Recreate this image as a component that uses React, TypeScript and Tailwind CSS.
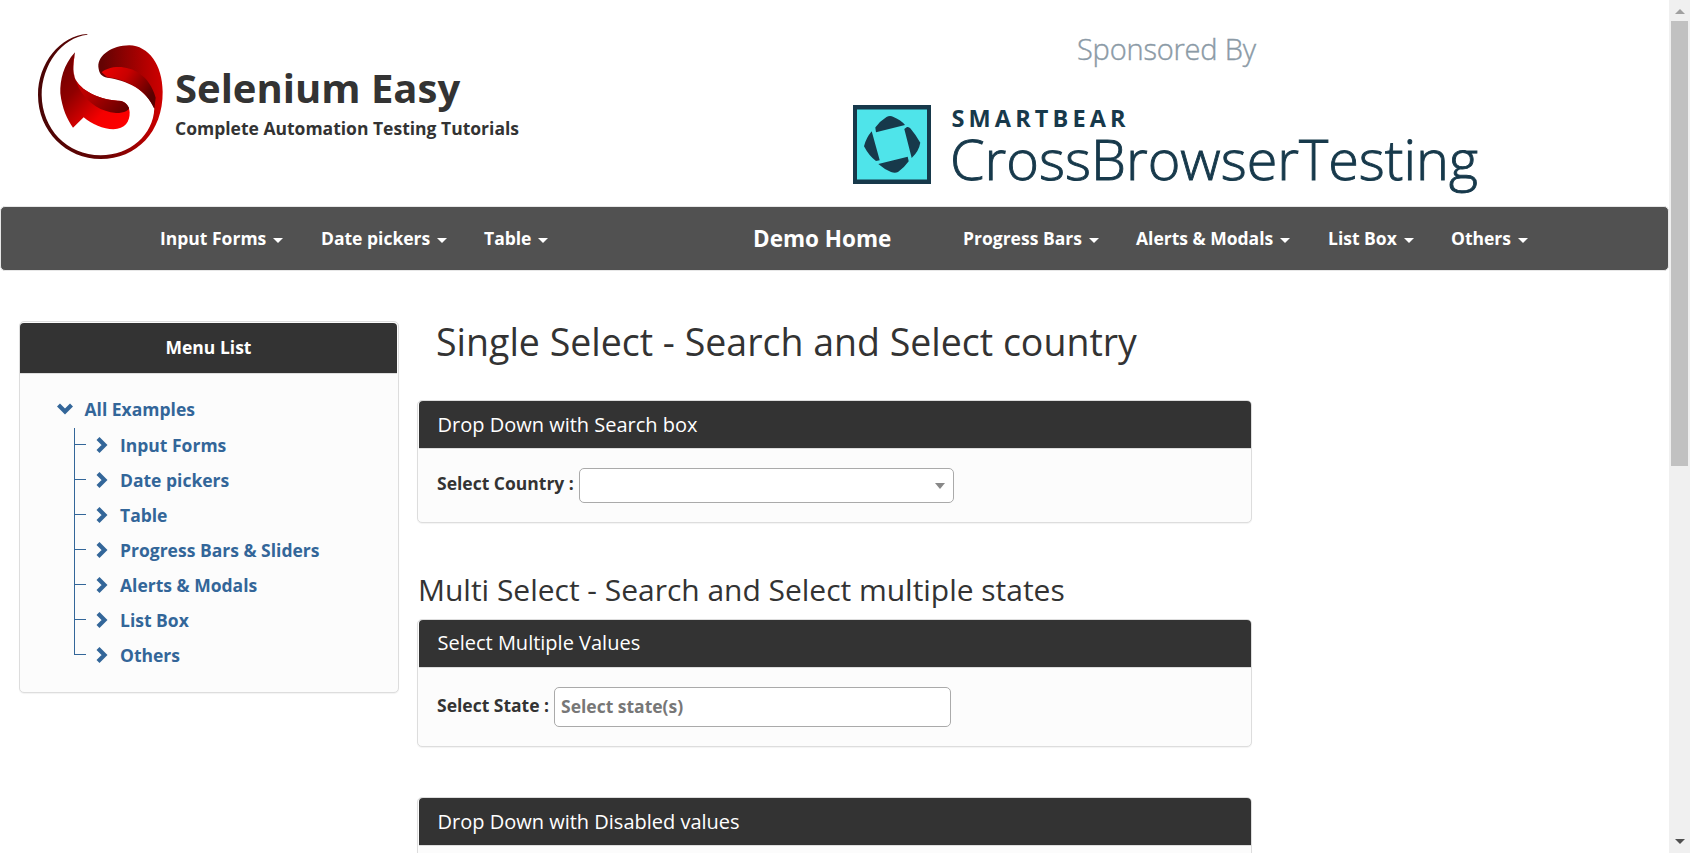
import React from "react";

function NavItem({ label, className }: { label: string; className: string }) {
  return (
    <a className={`flex shrink-0 items-center whitespace-nowrap text-[17.5px] font-bold leading-[25px] text-white ${className}`}>
      {label}
      <span className="ml-[7px] mt-[4px] border-x-[5px] border-t-[5px] border-x-transparent border-t-white" />
    </a>
  );
}

function Logo() {
  return (
    <svg className="ml-[30px] mt-[25px] h-[145px] w-[150px] shrink-0" viewBox="0 0 450 435">
      <defs>
        <linearGradient id="ring" x1="0" y1="0" x2="1" y2="0">
          <stop offset="0" stopColor="#4a0505" />
          <stop offset=".52" stopColor="#650303" />
          <stop offset=".85" stopColor="#b00000" />
          <stop offset="1" stopColor="#d00000" />
        </linearGradient>
        <linearGradient id="fold" x1="0" y1="0" x2="1" y2=".5">
          <stop offset="0" stopColor="#f00000" />
          <stop offset=".45" stopColor="#c80000" />
          <stop offset="1" stopColor="#5a0000" />
        </linearGradient>
        <linearGradient id="low" x1="0" y1="0" x2="1" y2="1">
          <stop offset="0" stopColor="#6a0000" />
          <stop offset=".35" stopColor="#8f0000" />
          <stop offset=".7" stopColor="#f40000" />
          <stop offset="1" stopColor="#ff0000" />
        </linearGradient>
        <linearGradient id="band" x1="0" y1="0" x2="1" y2="1">
          <stop offset="0" stopColor="#e80000" />
          <stop offset=".5" stopColor="#b40000" />
          <stop offset="1" stopColor="#5a0000" />
        </linearGradient>
      </defs>
      <path fill="url(#ring)" d="M172 27C90 32 24 115 24 210C24 320 110 402 212 402C320 402 399 320 398 200C398 120 355 62 298 61C245 62 205 90 205 125C207 145 215 155 232 158C290 165 350 195 373 250C370 330 300 391 212 391C110 391 36 310 35 210C35 120 95 38 172 29Z" />
      <path fill="url(#fold)" d="M215 142C250 112 350 118 377 218L373 252C348 196 300 165 232 157Z" />
      <path fill="url(#low)" d="M135 82C100 120 90 165 91 205C96 250 112 285 129 308L161 277C185 298 220 312 250 313C285 312 300 290 299 262C298 240 282 227 263 227C200 223 140 190 132 150C128 125 132 105 135 82Z" />
      <path fill="url(#band)" d="M134 88C113 165 170 258 258 264C284 264 299 254 297 248C290 232 278 227 263 227C200 223 140 190 132 150C128 125 132 105 134 88Z" />
    </svg>
  );
}

function SponsorLogo() {
  return (
    <svg className="h-[100px] w-[640px] overflow-visible" viewBox="0 0 640 100" fill="#17394b">
      <path d="M0 0H78V79H0Z" />
      <path d="M4 4.500H74V74.500H4Z" fill="#4fe4ea" />
      <path d="M33.500 12Q37 10 40.500 12Q48 15 52 20L23 27.300L22.300 22.500Q27 16 33.500 12ZM51.300 24L54 22Q56 21.500 57.500 23.500Q63 30 67.300 37.700Q66 46 58.700 53ZM18.700 26.300L26.700 55.300L23 56Q16 51 11 41.300Q13 33 18.700 26.300ZM54.700 51.700L55.700 56.300Q51 63 45 67Q42 68.500 38 67Q31 64 25.300 59Z" />
      <text x="98.500" y="22" fontSize="23.500" fontWeight="700" textLength="174" lengthAdjust="spacing">SMARTBEAR</text>
      <text x="97" y="75" fontSize="54.500" fontWeight="300" stroke="#17394b" strokeWidth="0.900" textLength="528" lengthAdjust="spacingAndGlyphs">CrossBrowserTesting</text>
    </svg>
  );
}

function Panel({ title, className, titleClassName = "leading-[47px]", children }: { title: string; className: string; titleClassName?: string; children?: React.ReactNode }) {
  return (
    <section className={`w-[835px] rounded-[5px] border border-[#ddd] bg-[#fcfcfc] shadow-[0_1px_1px_rgba(0,0,0,0.05)] ${className}`}>
      <h3 className={`ml-px h-[48px] rounded-t-[4px] border-b border-[#ddd] bg-[#333] pl-[18.500px] text-[20px] text-white ${titleClassName}`}>{title}</h3>
      {children}
    </section>
  );
}

const examples = ["Input Forms", "Date pickers", "Table", "Progress Bars & Sliders", "Alerts & Modals", "List Box", "Others"];

function Chevron({ className }: { className: string }) {
  return (
    <svg className={className} viewBox="0 0 12 16" fill="none" stroke="#369" strokeWidth="4.200">
      <path d="M2 1.500L8.500 8L2 14.500" />
    </svg>
  );
}

export default function App() {
  return (
    <div className="flex h-[853px] w-[1690px] overflow-hidden bg-white font-['Open_Sans',sans-serif] text-[#333]">
      <div className="h-full w-[1669px] shrink-0">
        <header className="flex h-[206px]">
          <Logo />
          <div className="ml-[-5px] w-[678px] shrink-0 pt-[60px]">
            <h1 className="text-[40px] font-bold leading-[56px]">Selenium Easy</h1>
            <p className="text-[17.5px] font-bold leading-[25px]">Complete Automation Testing Tutorials</p>
          </div>
          <div className="w-[640px] shrink-0 pt-[28px]">
            <p className="pl-[224px] text-[29px] font-light leading-[42px] tracking-[-0.2px] text-[#8b9aa6] [-webkit-text-stroke:0.4px_#8b9aa6]">Sponsored By</p>
            <div className="pt-[35px]">
              <SponsorLogo />
            </div>
          </div>
        </header>
        <nav className="flex h-[65px] items-center rounded-[5px] border border-[#e7e7e7] bg-[#515151]">
          <NavItem label="Input Forms" className="ml-[159px] w-[161px]" />
          <NavItem label="Date pickers" className="w-[163px]" />
          <NavItem label="Table" className="w-[269px]" />
          <a className="w-[210px] shrink-0 text-[22.5px] font-bold text-white">Demo Home</a>
          <NavItem label="Progress Bars" className="w-[173px]" />
          <NavItem label="Alerts & Modals" className="w-[192px]" />
          <NavItem label="List Box" className="w-[123px]" />
          <NavItem label="Others" className="" />
        </nav>
        <div className="flex">
          <aside className="ml-[19px] mt-[50px] h-[372px] w-[380px] shrink-0 rounded-[5px] border border-[#ddd] bg-[#fcfcfc] shadow-[0_1px_1px_rgba(0,0,0,0.05)]">
            <h3 className="mr-px mt-px h-[51px] rounded-t-[4px] border-b border-[#ddd] bg-[#333] text-center text-[17.5px] font-bold leading-[49px] text-white">Menu List</h3>
            <div className="pl-[36px] pt-[19px] text-[17.5px] font-bold text-[#369]">
              <div className="flex h-[35px] items-center pb-[2px]">
                <Chevron className="mb-[2px] ml-[2.500px] h-[16px] w-[12px] rotate-90" />
                <span className="ml-[14px] leading-[33px]">All Examples</span>
              </div>
              <ul className="ml-[18px]">
                {examples.map((name, i) => (
                  <li key={name} className="flex h-[35px]">
                    <span className={i === examples.length - 1 ? "h-[17px] w-px bg-[#369]" : "h-[35px] w-px bg-[#369]"} />
                    <span className="mt-[16px] h-px w-[11px] bg-[#369]" />
                    <Chevron className="ml-[10px] mt-[9px] h-[16px] w-[12px]" />
                    <span className="ml-[12px] leading-[35px]">{name}</span>
                  </li>
                ))}
              </ul>
            </div>
          </aside>
          <main className="ml-[18px] pt-[45px]">
            <h2 className="ml-[19px] h-[84px] text-[37.5px] leading-[51px]">Single Select - Search and Select country</h2>
            <Panel title="Drop Down with Search box" className="h-[123px]">
              <div className="flex pl-[19px] pt-[19px] text-[17.5px] font-bold">
                <span className="w-[142px] leading-[31px]">Select Country :</span>
                <div className="flex h-[35px] w-[375px] items-center justify-end rounded-[5px] border border-[#aaa] bg-white pr-[8px]">
                  <span className="border-x-[5px] border-t-[6px] border-x-transparent border-t-[#888]" />
                </div>
              </div>
            </Panel>
            <h2 className="ml-px mt-[47px] h-[49px] text-[30px] leading-[40px] tracking-[-0.02px]">Multi Select - Search and Select multiple states</h2>
            <Panel title="Select Multiple Values" className="h-[128px]" titleClassName="leading-[45px]">
              <div className="flex pl-[19px] pt-[19px] text-[17.5px] font-bold">
                <span className="w-[117px] leading-[37px]">Select State :</span>
                <div className="h-[40px] w-[397px] rounded-[5px] border border-[#aaa] bg-white pl-[6px] leading-[36px] text-[#777]">Select state(s)</div>
              </div>
            </Panel>
            <Panel title="Drop Down with Disabled values" className="mt-[50px] h-[128px]" />
          </main>
        </div>
      </div>
      <div className="flex h-full w-[21px] shrink-0 flex-col items-center bg-[#f0f0f0]">
        <span className="mt-[9px] border-x-[5px] border-b-[5px] border-x-transparent border-b-[#a0a0a0]" />
        <span className="mt-[7px] h-[445px] w-[17px] bg-[#c1c1c1]" />
        <span className="mt-[373px] border-x-[5px] border-t-[5px] border-x-transparent border-t-[#505050]" />
      </div>
    </div>
  );
}
